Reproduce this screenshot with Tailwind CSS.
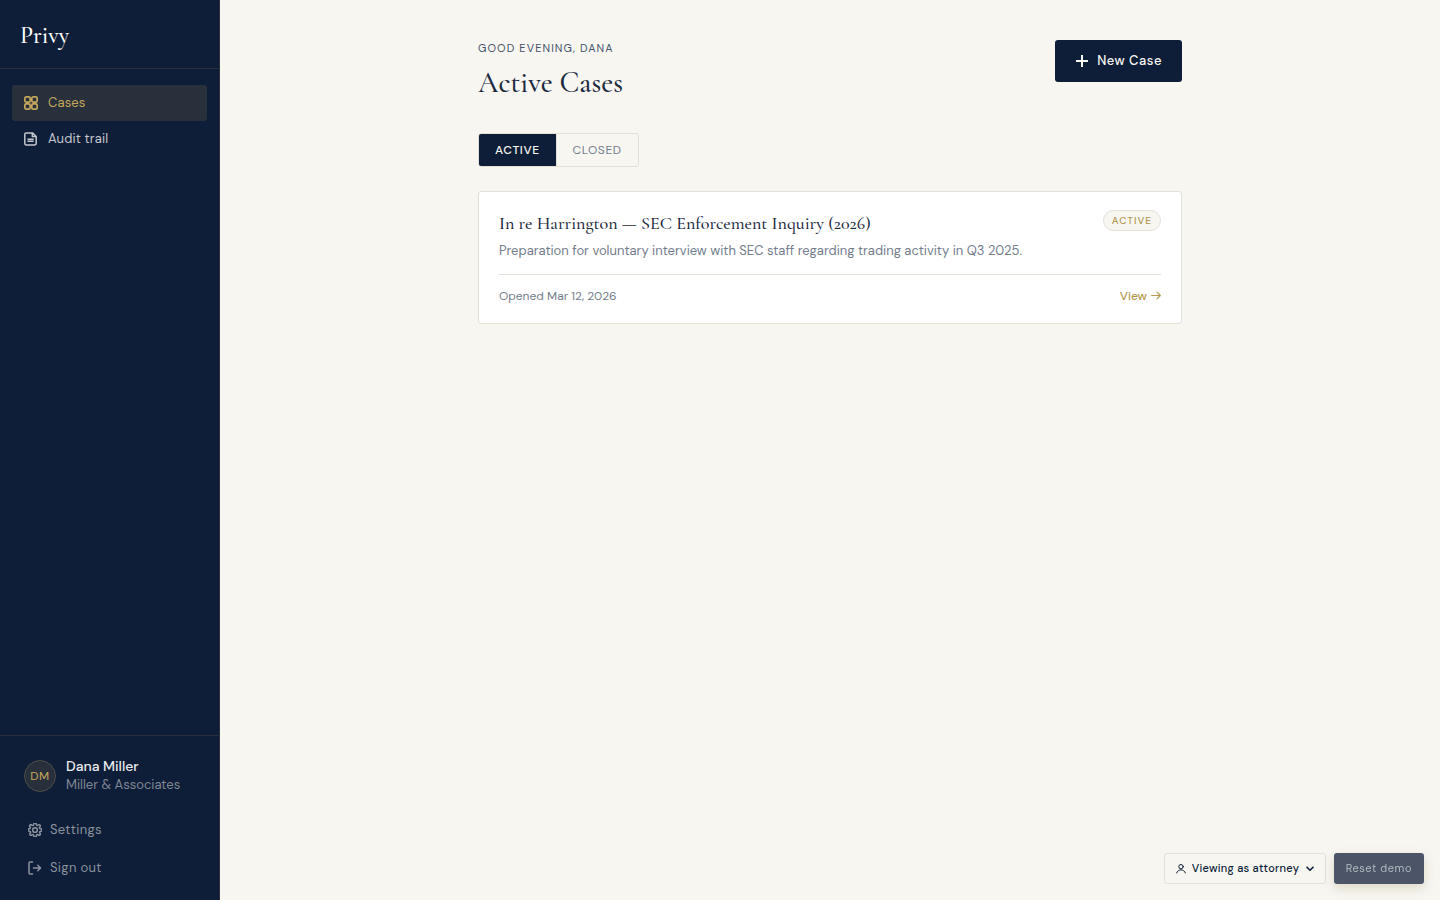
<!DOCTYPE html>
<html lang="en">
<head>
    <meta charset="UTF-8">
    <meta name="viewport" content="width=device-width, initial-scale=1"/>
    <title>Privy - Active Cases</title>
    <script src="https://cdn.jsdelivr.net/npm/@tailwindcss/browser@4"></script>
</head>

<body class="flex min-h-screen bg-[#f7f6f1] font-['DM_Sans','Inter',sans-serif] text-[13px] text-[#0e1e38] antialiased">

<!-- Sidebar -->
<aside class="sticky top-0 flex h-screen w-[220px] shrink-0 flex-col border-r border-[#28303b] bg-[#0e1e38]">
    <div class="border-b border-[#28303b] px-5 pt-[18px] pb-3.5">
        <a href="/" class="block font-['Cormorant_Garamond','Liberation_Serif',serif] text-2xl leading-9 font-medium text-white">Privy</a>
    </div>

    <nav class="flex-1 px-3 py-4 tracking-[0.01em]">
        <a href="/cases" class="flex h-9 items-center gap-2.5 rounded-[3px] bg-[#28303b] px-3 text-[#c4a75c]">
            <svg class="size-3.5" viewBox="0 0 14 14" fill="none" stroke="currentColor" stroke-width="1.7">
                <rect x=".85" y=".85" width="5.3" height="5.3" rx="1.4"/>
                <rect x="7.85" y=".85" width="5.3" height="5.3" rx="1.4"/>
                <rect x=".85" y="7.85" width="5.3" height="5.3" rx="1.4"/>
                <rect x="7.85" y="7.85" width="5.3" height="5.3" rx="1.4"/>
            </svg>
            Cases
        </a>
        <a href="/audit" class="flex h-9 items-center gap-2.5 rounded-[3px] px-3 text-[#c3c7ce]">
            <svg class="size-3.5" viewBox="0 0 14 14" fill="none" stroke="currentColor" stroke-width="1.5" stroke-linejoin="round">
                <path d="M2.2.9h6.3l3.7 3.6v6.9a1.5 1.5 0 0 1-1.5 1.5H2.2A1.4 1.4 0 0 1 .8 11.4V2.4A1.4 1.4 0 0 1 2.2.9z"/>
                <path d="M8.3 1v3.5h3.8"/>
                <path d="M3.5 7.2h6.2M3.5 9.3h6.2"/>
            </svg>
            Audit trail
        </a>
    </nav>

    <div class="border-t border-[#28303b] px-3 pt-3 pb-[13px]">
        <div class="flex items-center gap-2.5 px-3 py-2.5">
            <div class="flex size-8 items-center justify-center rounded-full border border-[#4b4c49] bg-[#28303b] text-xs tracking-wider text-[#c4a75c]">DM</div>
            <div>
                <p class="text-sm leading-[17px] font-medium text-[#e9ebee]">Dana Miller</p>
                <p class="leading-[19px] text-[#808794]">Miller &amp; Associates</p>
            </div>
        </div>
        <div class="mt-[7px] text-[#8b929e]">
            <button type="button" class="flex h-[38px] w-full items-center gap-2 px-4 tracking-wide">
                <svg class="size-3.5" viewBox="1 1 22 22" fill="none" stroke="currentColor" stroke-width="2.4" stroke-linecap="round" stroke-linejoin="round">
                    <circle cx="12" cy="12" r="3.7"/>
                    <path d="M19.4 15a1.65 1.65 0 0 0 .33 1.82l.06.06a2 2 0 1 1-2.83 2.83l-.06-.06a1.65 1.65 0 0 0-2.8 1.17V21a2 2 0 0 1-4 0v-.09a1.65 1.65 0 0 0-2.9-1.2l-.06.06a2 2 0 1 1-2.83-2.83l.06-.06A1.65 1.65 0 0 0 3.09 14H3a2 2 0 0 1 0-4h.09a1.65 1.65 0 0 0 1.18-2.82l-.06-.06a2 2 0 1 1 2.83-2.83l.06.06A1.65 1.65 0 0 0 10 3.09V3a2 2 0 0 1 4 0v.09a1.65 1.65 0 0 0 2.82 1.18l.06-.06a2 2 0 1 1 2.83 2.83l-.06.06A1.65 1.65 0 0 0 20.91 10H21a2 2 0 0 1 0 4h-.09a1.65 1.65 0 0 0-1.51 1z"/>
                </svg>
                Settings
            </button>
            <button type="button" class="flex h-[38px] w-full items-center gap-2 px-4 tracking-wide">
                <svg class="size-3.5" viewBox="0 0 14 14" fill="none" stroke="currentColor" stroke-width="1.5" stroke-linecap="round" stroke-linejoin="round">
                    <path d="M4.5 1H2a1 1 0 0 0-1 1v10a1 1 0 0 0 1 1h2.5M5.5 7h7M9.8 4.2 12.6 7 9.8 9.8"/>
                </svg>
                Sign out
            </button>
        </div>
    </div>
</aside>

<!-- Content -->
<main class="min-w-0 flex-1">
    <div class="mx-auto max-w-3xl px-8 py-10">
        <header class="mb-8 flex items-start justify-between">
            <div>
                <p class="text-[11px] leading-4 tracking-widest text-[#46526a] uppercase">Good evening, Dana</p>
                <h1 class="mt-2 font-['Cormorant_Garamond','Liberation_Serif',serif] text-[29px] leading-[37px] font-medium text-[#1c2940]">Active Cases</h1>
            </div>
            <button type="button" class="flex h-[42px] items-center gap-2 rounded-[3px] bg-[#0e1e38] px-5 font-medium tracking-[0.04em] text-[#f7f6f1]">
                <svg class="size-3.5" viewBox="0 0 14 14" fill="none" stroke="currentColor" stroke-width="2">
                    <path d="M7 1v12M1 7h12"/>
                </svg>
                New Case
            </button>
        </header>

        <div class="mb-6 flex w-fit overflow-hidden rounded-[3px] border border-[#e3e0d8] text-xs">
            <button type="button" class="h-8 bg-[#0e1e38] px-4 font-medium tracking-wider text-[#f7f6f1] uppercase">Active</button>
            <button type="button" class="h-8 border-l border-[#e3e0d8] px-4 tracking-wider text-[#737d8d] uppercase">Closed</button>
        </div>

        <article class="rounded-[3px] border border-[#e3e0d8] bg-white px-5 pt-[18px] pb-5">
            <div class="flex items-start justify-between">
                <h2 class="font-['Cormorant_Garamond','Liberation_Serif',serif] text-lg leading-[26px] font-medium text-[#1c2940]">In re Harrington — SEC Enforcement Inquiry (2026)</h2>
                <span class="rounded-full border border-[#e3e0d8] bg-[#f7f6f1] px-2 text-[10px] leading-[19px] font-medium tracking-widest text-[#b39850] uppercase">Active</span>
            </div>
            <p class="mt-1.5 leading-[18px] text-[#737d8d]">Preparation for voluntary interview with SEC staff regarding trading activity in Q3 2025.</p>
            <div class="mt-3.5 flex items-center justify-between border-t border-[#e3e0d8] pt-3.5 text-xs leading-[14px] text-[#737d8d]">
                <time datetime="2026-03-12">Opened Mar 12, 2026</time>
                <a href="/cases/harrington" class="flex items-center gap-1 font-medium text-[#b39850]">
                    View
                    <svg class="size-2.5" viewBox="0 0 10 10" fill="none" stroke="currentColor" stroke-width="1.2" stroke-linecap="round" stroke-linejoin="round">
                        <path d="M.6 4.5h8.7M6 1.2 9.3 4.5 6 7.8"/>
                    </svg>
                </a>
            </div>
        </article>
    </div>
</main>

<!-- Demo controls -->
<div class="fixed right-4 bottom-4 flex gap-2 text-[11px]">
    <label class="flex h-[31px] items-center gap-1.5 rounded-[3px] border border-[#e3e0d8] bg-[#f7f6f1] px-[11px] font-medium">
        <svg class="size-2.5" viewBox="0 0 10 10" fill="none" stroke="currentColor" stroke-width="1" stroke-linecap="round">
            <circle cx="5" cy="2.7" r="2.2"/>
            <path d="M.6 9C1.3 7 3 5.900 5 5.900S8.700 7 9.400 9"/>
        </svg>
        <select aria-label="Role" class="appearance-none bg-transparent tracking-wide">
            <option>Viewing as attorney</option>
        </select>
        <svg class="size-2" viewBox="0 0 8 8" fill="none" stroke="currentColor" stroke-width="1.6" stroke-linecap="round" stroke-linejoin="round">
            <path d="M1 2.200 4 5.200l3-3"/>
        </svg>
    </label>
    <button type="button" class="h-[31px] rounded-[3px] bg-[#4b5567] px-3 tracking-wider text-[#b3b8bf] shadow-[0_4px_12px_rgba(120,90,40,0.2)]">Reset demo</button>
</div>

</body>
</html>
